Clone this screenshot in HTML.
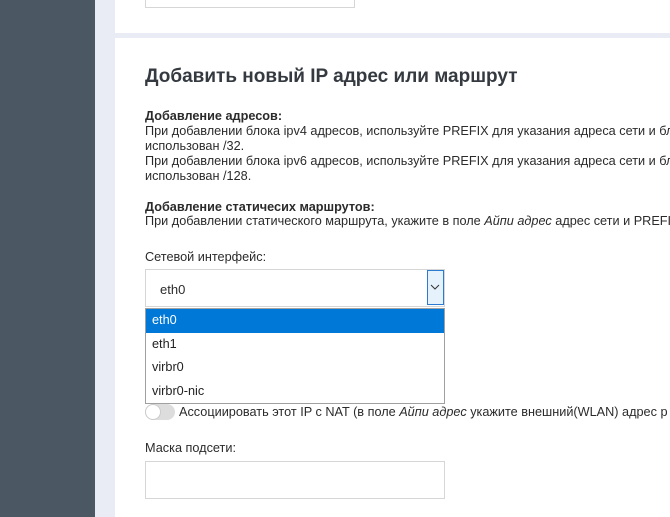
<!DOCTYPE html>
<html><head><meta charset="utf-8"><style>
*{margin:0;padding:0;box-sizing:border-box}
html,body{width:670px;height:517px;overflow:hidden}
body{background:#e9ecf4;font-family:"Liberation Sans",sans-serif;color:#333;position:relative}
.wrap{position:absolute;left:0;top:0;width:670px;height:517px;overflow:hidden}
.side{position:absolute;left:0;top:0;width:95px;height:517px;background:#4b5762}
.card{position:absolute;left:115px;right:0;background:#fff}
.t{position:absolute;left:145px;white-space:nowrap;font-size:12.7px;color:#2b2b2b}
.box{position:absolute;background:#fff;border:1px solid #d6d6d6}
h1{position:absolute;left:145px;top:66px;font-size:19px;font-weight:bold;color:#343a40;white-space:nowrap}
.dd{position:absolute;left:145px;top:308px;width:300px;height:96px;border:1px solid #a0a0a0;background:#fff}
.dd div{height:23.5px;line-height:23px;padding-left:6px;font-size:12.7px;color:#222}
.dd .sel{background:#0078d7;color:#fff}
</style></head><body><div class="wrap">
<div class="side"></div>
<div class="card" style="top:0;height:33px"></div>
<div class="box" style="left:145px;top:-2px;width:210px;height:10px"></div>
<div class="card" style="top:38px;height:479px"></div>
<h1>Добавить новый IP адрес или маршрут</h1>
<div class="t" style="top:109px;font-weight:bold">Добавление адресов:</div>
<div class="t" style="top:124px">При добавлении блока ipv4 адресов, используйте PREFIX для указания адреса сети и блока адресов.</div>
<div class="t" style="top:139px">использован /32.</div>
<div class="t" style="top:154px">При добавлении блока ipv6 адресов, используйте PREFIX для указания адреса сети и блока адресов.</div>
<div class="t" style="top:169px">использован /128.</div>
<div class="t" style="top:200px;font-weight:bold">Добавление статичесих маршрутов:</div>
<div class="t" style="top:214px">При добавлении статического маршрута, укажите в поле <i>Айпи адрес</i> адрес сети и PREFIX</div>
<div class="t" style="top:250px">Сетевой интерфейс:</div>
<div class="box" style="left:145px;top:269px;width:300px;height:38px"></div>
<div class="t" style="top:282px;left:160px;font-size:13px">eth0</div>
<div style="position:absolute;left:427px;top:270px;width:17px;height:35px;border:1px solid #2b7bd0;background:#e5f1fb"></div>
<svg style="position:absolute;left:430px;top:284px" width="10" height="6" viewBox="0 0 10 6"><path d="M1 1L5 5L9 1" stroke="#333" fill="none" stroke-width="1"/></svg>
<div class="dd"><div class="sel">eth0</div><div>eth1</div><div>virbr0</div><div>virbr0-nic</div></div>
<div style="position:absolute;left:145px;top:404px;width:30px;height:16px;border-radius:8px;background:#ddd"></div>
<div style="position:absolute;left:145px;top:404px;width:16px;height:16px;border-radius:8px;background:#fff;border:1px solid #ccc"></div>
<div class="t" style="top:405px;left:179px">Ассоциировать этот IP с NAT (в поле <i>Айпи адрес</i> укажите внешний(WLAN) адрес р</div>
<div class="t" style="top:441px">Маска подсети:</div>
<div class="box" style="left:145px;top:461px;width:300px;height:38px"></div>
</div></body></html>
